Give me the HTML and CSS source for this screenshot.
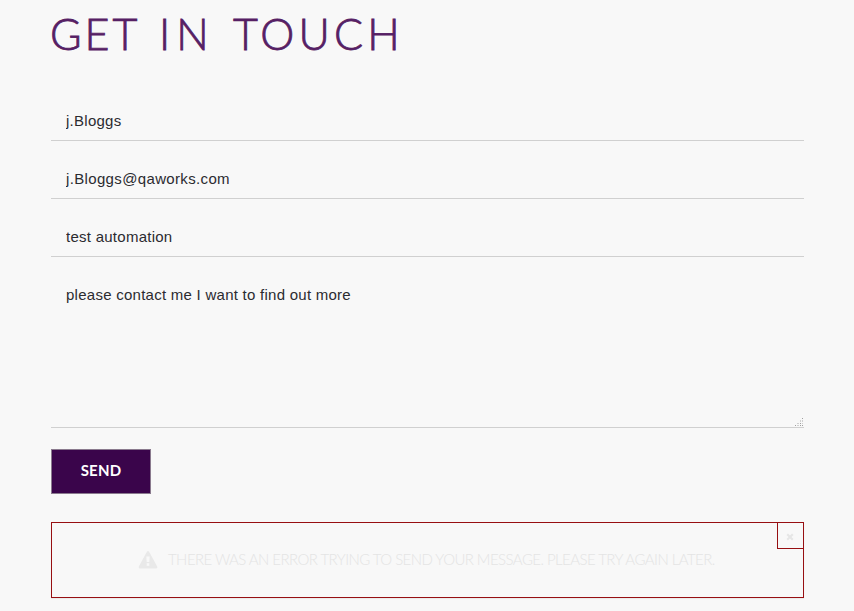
FILE: index.html
```html
<!DOCTYPE html>
<html lang="en">
<head>
<meta charset="utf-8">
<title>Get in touch</title>
<link rel="stylesheet" href="styles.css">
</head>
<body>
<main class="contact">
  <h1 class="title"><span class="get">GET</span> <span class="in">IN</span> <span class="touch">TOUCH</span></h1>
  <form class="form">
    <input class="field" type="text" value="j.Bloggs" aria-label="Name">
    <input class="field email" type="text" value="j.Bloggs@qaworks.com" aria-label="Email">
    <input class="field" type="text" value="test automation" aria-label="Subject">
    <div class="message">
      <textarea class="field area" aria-label="Message">please contact me I want to find out more</textarea>
      <svg class="grip" width="9" height="9" viewBox="0 0 9 9" shape-rendering="crispEdges">
        <path fill="#d0d0d0" d="M5 2h1v2H5zM7 2h1v2H7zM2 5h2v1H2zM7 5h1v1H7zM2 7h2v1H2z"/>
        <path fill="#a0a0a0" d="M7 0h1v1H7zM5 5h1v1H5zM0 7h1v1H0zM5 7h1v1H5zM7 7h1v1H7z"/>
      </svg>
    </div>
    <button class="send" type="button">SEND</button>
  </form>
  <div class="alert">
    <svg class="warning" width="20" height="18" viewBox="0 0 20 18">
      <path fill="#e9e9e9" fill-rule="evenodd" d="M8.9.7Q10-.7 11.1.7L19.2 15.4Q19.8 17.5 18 17.5H2Q.2 17.5.8 15.4ZM8.3 5.5L8.7 11H11.3L11.7 5.5ZM8.7 12.3V14.8H11.3V12.3Z"/>
    </svg>
    <span class="alert-text">THERE WAS AN ERROR TRYING TO SEND YOUR MESSAGE. PLEASE TRY AGAIN LATER.</span>
    <button class="close" type="button" aria-label="Close">
      <svg width="8" height="8" viewBox="0 0 8 8"><path d="M1.2 1.2L6.8 6.8M6.8 1.2L1.2 6.8" stroke="#e6e6e6" stroke-width="2"/></svg>
    </button>
  </div>
</main>
</body>
</html>
```
FILE: styles.css
```css
* { box-sizing: border-box; }
body { margin: 0; background: #f8f8f8; height: 611px; overflow: hidden; }
.contact { width: 753px; margin-left: 51px; }
.title {
  margin: 0;
  padding-top: 8px;
  height: 98px;
  font: 300 43px/52px Lato, sans-serif;
  -webkit-text-stroke: 0.8px #562064;
  color: #562064;
  white-space: nowrap;
  display: flex;
}
.title span { flex: none; }
.get { letter-spacing: 3px; width: 109px; margin-left: -1px; }
.in { letter-spacing: 6px; width: 74px; }
.touch { letter-spacing: 4.2px; }
.form { display: flex; flex-direction: column; align-items: stretch; }
.field {
  display: block;
  width: 100%;
  height: 43px;
  margin: 0 0 15px;
  padding: 2px 15px 0;
  border: 0;
  border-bottom: 1px solid #d0d0d0;
  border-radius: 0;
  outline: 0;
  background: transparent;
  color: #2b2b30;
  font: 15px "Liberation Sans", sans-serif;
  letter-spacing: 0.26px;
}
.email { letter-spacing: 0.35px; }
.message { position: relative; margin-bottom: 21px; }
.area { height: 156px; padding-top: 14px; margin-bottom: 0; resize: none; overflow: hidden; }
.grip { position: absolute; right: 0; bottom: 1px; }
.send {
  align-self: flex-start;
  width: 100px;
  height: 45px;
  padding: 0 0 3px;
  border: 1px solid #8a7a8e;
  border-radius: 0;
  background: #3a054b;
  color: #fff;
  font: 700 15px Lato, sans-serif;
  letter-spacing: 0.2px;
}
.alert {
  position: relative;
  display: flex;
  align-items: center;
  height: 76px;
  margin-top: 28px;
  padding-left: 86px;
  border: 1px solid #970f12;
  box-shadow: 0 1px 1px rgba(0, 0, 0, 0.05);
}
.warning { flex: none; margin-right: 10px; }
.alert-text { font: 300 15px Lato, sans-serif; letter-spacing: -0.56px; color: #e4e4e4; white-space: nowrap; padding-bottom: 2px; }
.close {
  position: absolute;
  top: -1px;
  right: -1px;
  width: 27px;
  height: 27px;
  padding: 3px 1px 0 0;
  border: 1px solid #970f12;
  background: transparent;
  display: flex;
  align-items: center;
  justify-content: center;
}
```
